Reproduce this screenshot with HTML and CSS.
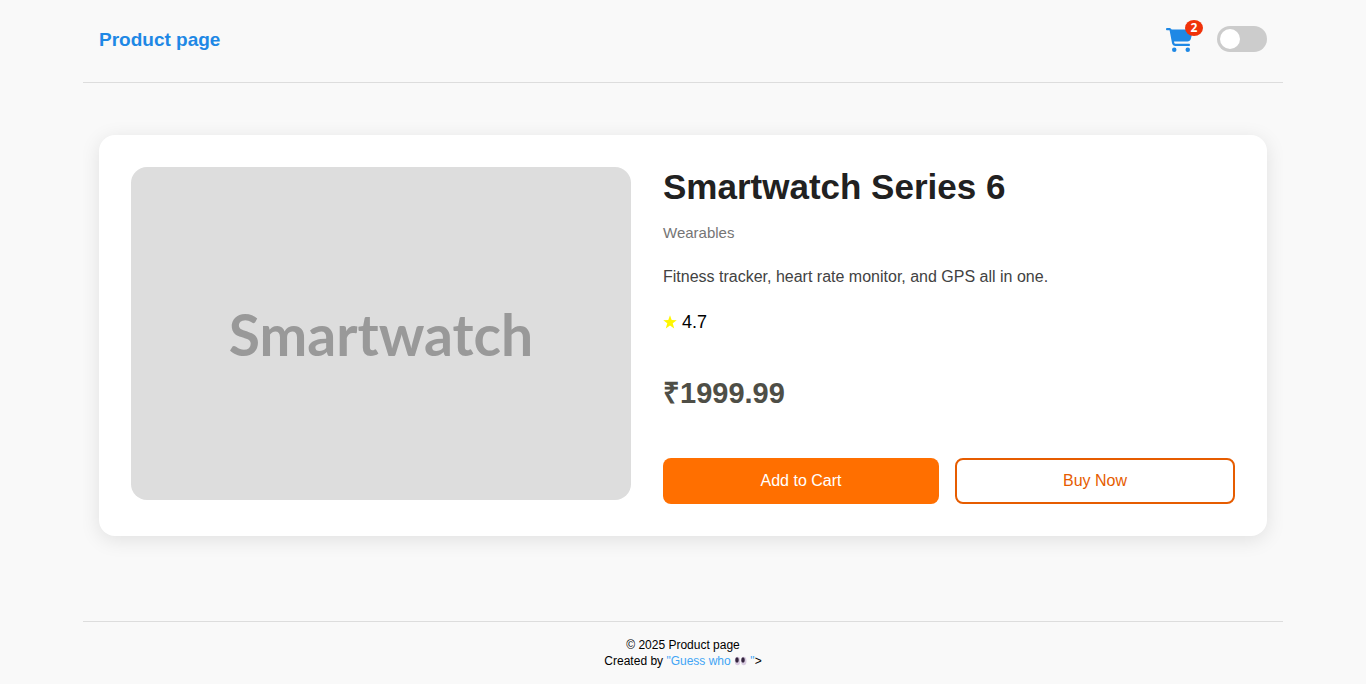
FILE: index.html
```
<!DOCTYPE html>
<html lang="en">
<head>
<meta charset="utf-8">
<meta name="viewport" content="width=device-width, initial-scale=1">
<title>Product page</title>
<link rel="stylesheet" href="styles.css">
</head>
<body>
<header class="header">
  <a class="brand" href="#">Product page</a>
  <div class="header-actions">
    <a class="cart" href="#" aria-label="Cart">
      <svg class="cart-icon" viewBox="0 0 576 512" aria-hidden="true"><path d="M0 24C0 10.7 10.7 0 24 0H69.5c22 0 41.5 12.8 50.6 32h411c26.3 0 45.5 25 38.6 50.4l-41 152.3c-8.5 31.4-37 53.3-69.5 53.3H170.7l5.4 28.5c2.2 11.3 12.1 19.5 23.6 19.5H488c13.3 0 24 10.7 24 24s-10.7 24-24 24H199.7c-34.6 0-64.3-24.6-70.7-58.5L77.4 54.5c-.7-3.8-4-6.5-7.9-6.5H24C10.7 48 0 37.3 0 24zM128 464a48 48 0 1 1 96 0 48 48 0 1 1-96 0zm336-48a48 48 0 1 1 0 96 48 48 0 1 1 0-96z"/></svg>
      <span class="cart-count">2</span>
    </a>
    <input class="theme-switch" type="checkbox" role="switch" aria-label="Dark mode">
  </div>
</header>
<main class="main">
  <article class="product">
    <div class="product-image" role="img" aria-label="Smartwatch">Smartwatch</div>
    <div class="product-info">
      <h1 class="product-title">Smartwatch Series 6</h1>
      <p class="product-category">Wearables</p>
      <p class="product-description">Fitness tracker, heart rate monitor, and GPS all in one.</p>
      <p class="product-rating">
        <svg class="star" viewBox="0 0 24 24" aria-hidden="true"><path d="M12 0.500 14.900 8.700 23.600 8.900 16.700 14.200 19.200 23 12 17.900 4.800 23 7.300 14.200 0.400 8.900 9.100 8.700Z"/></svg>
        <span>4.7</span>
      </p>
      <p class="product-price">₹1999.99</p>
      <div class="product-actions">
        <button class="button button-primary" type="button">Add to Cart</button>
        <button class="button button-outline" type="button">Buy Now</button>
      </div>
    </div>
  </article>
</main>
<footer class="footer">
  <p class="footer-line">© 2025 Product page</p>
  <p class="footer-line footer-credit">Created by <a class="footer-link" href="#">"Guess who <svg class="eyes" viewBox="0 0 26 20" role="img" aria-label="eyes"><ellipse class="eye-white" cx="7" cy="10" rx="5.500" ry="8.500"/><ellipse class="eye-white" cx="19.500" cy="10" rx="5.500" ry="8.500"/><ellipse class="eye-pupil" cx="6" cy="8" rx="3.500" ry="5.500"/><ellipse class="eye-pupil" cx="18" cy="8" rx="3.500" ry="5.500"/></svg> "</a>&gt;</p>
</footer>
</body>
</html>
```
FILE: styles.css
```
* {
  box-sizing: border-box;
  margin: 0;
  padding: 0;
}

body {
  display: flex;
  flex-direction: column;
  max-width: 1200px;
  min-height: 100vh;
  margin: 0 auto;
  background: #f9f9f9;
  color: #000;
  font-family: "Liberation Sans", Arial, sans-serif;
}

a {
  text-decoration: none;
}

.header {
  display: flex;
  justify-content: space-between;
  align-items: flex-start;
  padding: 26px 16px 28px;
  border-bottom: 1px solid #ddd;
}

.brand {
  color: #1e88e5;
  font-size: 19px;
  font-weight: bold;
  line-height: 28px;
}

.header-actions {
  display: flex;
  align-items: center;
  gap: 24px;
}

.cart {
  position: relative;
  display: flex;
  padding-top: 2px;
}

.cart-icon {
  width: 27px;
  height: 24px;
  fill: #1e88e5;
}

.cart-count {
  position: absolute;
  top: -6px;
  right: -10px;
  width: 18px;
  border-radius: 50%;
  background: #f0320a;
  color: #fff;
  font-family: "Open Sans", "Liberation Sans", sans-serif;
  font-size: 12px;
  font-weight: bold;
  line-height: 16px;
  text-align: center;
}

.theme-switch {
  display: flex;
  align-items: center;
  width: 50px;
  height: 26px;
  padding: 3px;
  border-radius: 13px;
  background: #ccc;
  appearance: none;
  cursor: pointer;
}

.theme-switch::before {
  width: 20px;
  height: 20px;
  border-radius: 50%;
  background: #fff;
  content: "";
}

.theme-switch:checked {
  justify-content: flex-end;
  background: #1e88e5;
}

.main {
  flex: 1;
  padding: 52px 16px;
}

.product {
  display: flex;
  align-items: flex-start;
  gap: 32px;
  padding: 32px;
  border-radius: 16px;
  background: #fff;
  box-shadow: 0 4px 20px rgba(0, 0, 0, 0.1);
}

.product-image {
  display: flex;
  flex: 0 1 500px;
  align-items: center;
  justify-content: center;
  aspect-ratio: 500 / 333;
  border-radius: 16px;
  background: #ddd;
  color: #999;
  font-family: Lato, sans-serif;
  font-size: 57px;
  font-weight: bold;
}

.product-info {
  flex: 1;
}

.product-title {
  margin-bottom: 16px;
  color: #212121;
  font-size: 35px;
  line-height: 40px;
}

.product-category {
  margin-bottom: 24px;
  color: #757575;
  font-size: 15px;
  line-height: 20px;
}

.product-description {
  margin-bottom: 25px;
  color: #424242;
  font-size: 16px;
  line-height: 20px;
}

.product-rating {
  display: flex;
  align-items: center;
  gap: 5px;
  margin-bottom: 43px;
  font-size: 18px;
  line-height: 20px;
}

.star {
  width: 14px;
  height: 14px;
  fill: #fff700;
}

.product-price {
  margin-bottom: 47px;
  color: #4e4e46;
  font-size: 29px;
  font-weight: bold;
  line-height: 36px;
}

.product-actions {
  display: flex;
  gap: 16px;
}

.button {
  flex: 1;
  padding: 12px 16px;
  border: 0;
  border-radius: 8px;
  font: inherit;
  cursor: pointer;
}

.button-primary {
  background: #ff6f00;
  color: #fff;
}

.button-outline {
  border: 2px solid #e65c00;
  background: transparent;
  color: #e65c00;
}

.footer {
  padding: 15px 16px;
  border-top: 1px solid #ddd;
  font-size: 12px;
  line-height: 16px;
  text-align: center;
}

.footer-link {
  color: #42a5f5;
}

.eyes {
  width: 13px;
  height: 10px;
  vertical-align: -1px;
}

.eye-white {
  fill: #d8cbe0;
}

.eye-pupil {
  fill: #35253f;
}
```
